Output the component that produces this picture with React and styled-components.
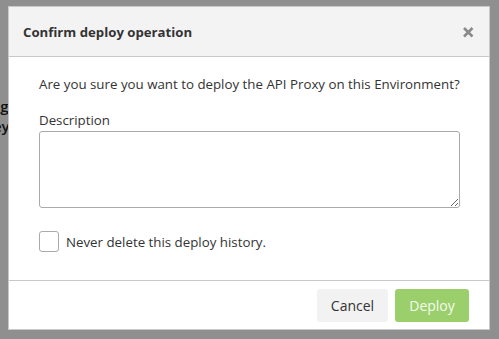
import React from "react";
import styled, { createGlobalStyle } from "styled-components";

const GlobalStyle = createGlobalStyle`
  html, body { margin: 0; padding: 0; background: #fff; }
  body { font-family: "Open Sans", "Noto Sans", sans-serif; color: #333; }
  * { box-sizing: border-box; }
`;

const Page = styled.div`
  padding-top: 96px;
  margin-left: -53px;
  font-size: 15px;
  font-weight: 600;
  color: #222;
  line-height: 20px;
`;

const BgLine = styled.div`
  padding-left: ${(p) => p.$indent || 0}px;
  white-space: nowrap;
`;

const Backdrop = styled.div`
  position: fixed;
  inset: 0;
  background: rgba(0, 0, 0, 0.44);
`;

const Dialog = styled.div`
  position: fixed;
  top: 6px;
  left: 8px;
  width: 482px;
  background: #fff;
  border: 1px solid #c9c9c9;
  display: flex;
  flex-direction: column;
`;

const Header = styled.div`
  height: 50px;
  background: #f3f3f3;
  border-bottom: 1px solid #c8c8c8;
  display: flex;
  align-items: center;
  justify-content: space-between;
  padding: 0 15px 0 14px;
`;

const Title = styled.h4`
  margin: 0;
  font-size: 13.2px;
  font-weight: 700;
  color: #333;
`;

const Close = styled.button`
  border: 0;
  background: none;
  padding: 0;
  width: 12px;
  height: 12px;
  display: flex;
  cursor: pointer;
`;

const Body = styled.div`
  padding: 17px 29px 28px 30px;
  display: flex;
  flex-direction: column;
  font-size: 13.3px;
  line-height: 20px;
  color: #333;
`;

const Question = styled.p`
  margin: 0 0 16px;
  white-space: nowrap;
`;

const Label = styled.label`
  display: block;
  margin-bottom: 1px;
`;

const TextArea = styled.textarea`
  width: 421px;
  height: 77px;
  border: 1px solid #aaa;
  border-radius: 3px;
  resize: vertical;
  font: inherit;
  margin: 0;
  display: block;
`;

const CheckRow = styled.label`
  display: flex;
  align-items: center;
  gap: 7px;
  margin-top: 23px;
`;

const Box = styled.span`
  width: 20px;
  height: 21px;
  border: 1px solid #aaa;
  border-radius: 3px;
  background: #fff;
`;

const Footer = styled.div`
  border-top: 1px solid #c8c8c8;
  padding: 8px 20px 7px;
  display: flex;
  justify-content: flex-end;
  gap: 7px;
`;

const Button = styled.button`
  height: 33px;
  width: ${(p) => p.$w}px;
  border: 0;
  border-radius: 3px;
  font-family: inherit;
  font-size: 14px;
  background: ${(p) => (p.$primary ? "#9bcf6c" : "#f2f2f2")};
  color: ${(p) => (p.$primary ? "#f4fbee" : "#333")};
  cursor: pointer;
`;

export default function App() {
  return (
    <>
      <GlobalStyle />
      <Page>
        <BgLine>Stagging environment</BgLine>
        <BgLine $indent={9}>Api Key value</BgLine>
      </Page>
      <Backdrop />
      <Dialog>
        <Header>
          <Title>Confirm deploy operation</Title>
          <Close aria-label="close">
            <svg width="12" height="12" viewBox="0 0 12 12">
              <path d="M2 2 L10.5 10.5 M10.5 2 L2 10.5" stroke="#8a8a8a" strokeWidth="2.6" strokeLinecap="butt" />
            </svg>
          </Close>
        </Header>
        <Body>
          <Question>Are you sure you want to deploy the API Proxy on this Environment?</Question>
          <Label>Description</Label>
          <TextArea />
          <CheckRow>
            <Box />
            <span>Never delete this deploy history.</span>
          </CheckRow>
        </Body>
        <Footer>
          <Button $w={71}>Cancel</Button>
          <Button $w={74} $primary>Deploy</Button>
        </Footer>
      </Dialog>
    </>
  );
}
